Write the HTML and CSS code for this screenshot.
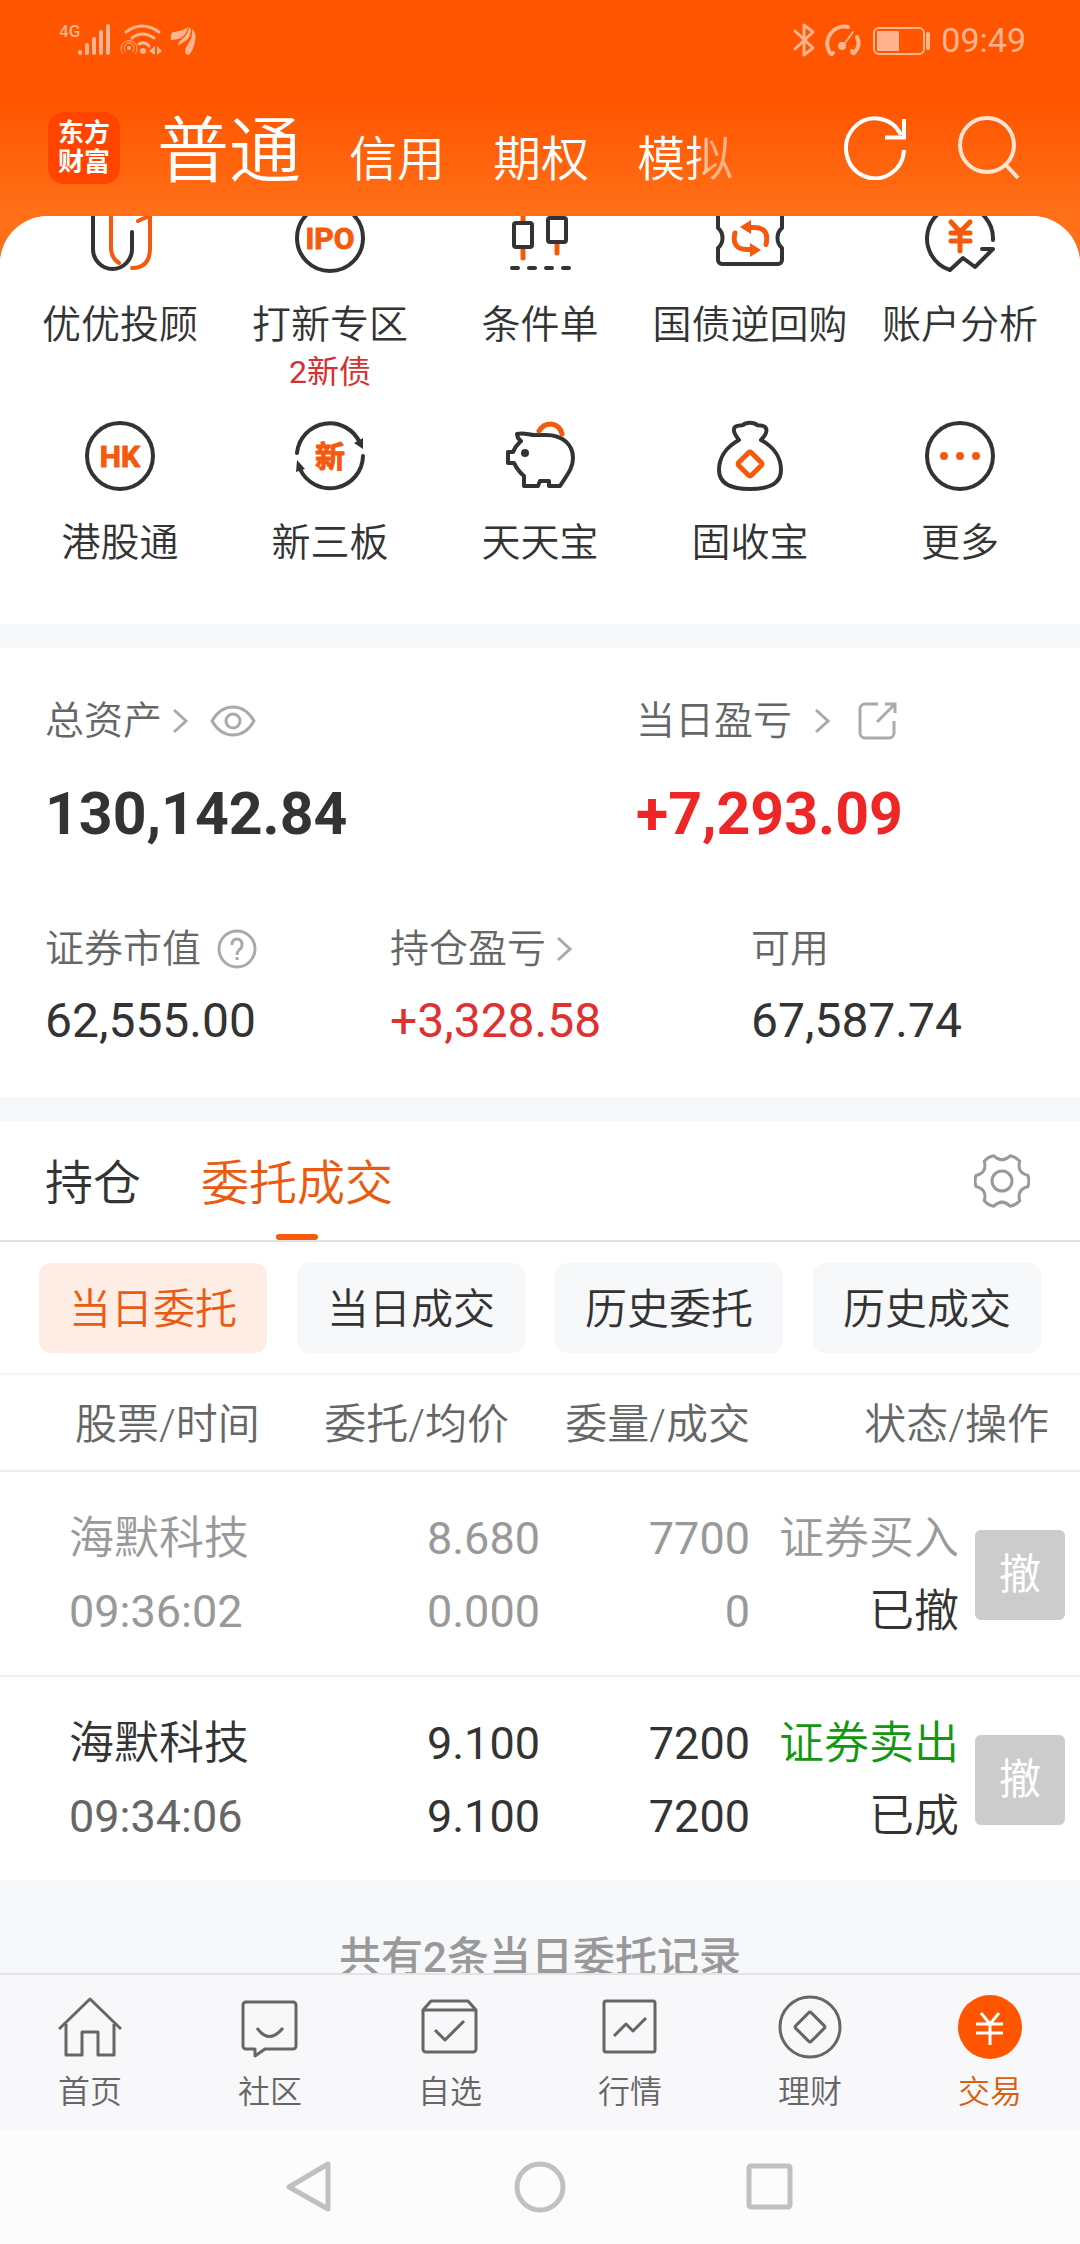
FILE: index.html
```html
<!DOCTYPE html>
<html lang="zh-CN">
<head>
<meta charset="utf-8">
<meta name="viewport" content="width=device-width, initial-scale=1">
<title>交易</title>
<link rel="stylesheet" href="styles.css">
</head>
<body>
<div class="app">
  <header class="top">
    <div class="status">
      <div class="status-side">
        <span class="status-net">4G</span>
        <svg width="34" height="34" viewBox="0 0 34 34" aria-hidden="true">
          <path d="M2 29v1M9 22v8M16 16v14M23 9v21M30 3v27" stroke="currentColor" stroke-width="4" stroke-linecap="round"/>
        </svg>
        <svg width="42" height="34" viewBox="0 0 42 34" fill="none" stroke="currentColor" aria-hidden="true">
          <path d="M6 9Q22-3 39 9M12 15Q22 7 34 15" stroke-width="3" stroke-linecap="round"/>
          <path d="M19 21q6-3 10 2" stroke-width="3" stroke-linecap="round"/>
          <path d="M3 31a8 8 0 1 1 12 0M6 29a5 5 0 1 1 6 0" stroke-width="1"/>
          <g fill="currentColor" stroke="none"><circle cx="9" cy="25" r="2"/><circle cx="23" cy="28" r="3"/><path d="M35 23v9l-6-4zM37 23v9l5-4z"/></g>
        </svg>
        <svg width="26" height="34" viewBox="0 0 26 34" fill="currentColor" aria-hidden="true">
          <path d="M1 17Q0 9 4 9 13 8 18 4 16 14 8 16 4 17 1 17zM8 23Q8 19 12 16 18 12 19 4q2 1 2 4-1 8-7 11-4 2-6 4zM19 32q-4 0-4-4 0-3 3-7 5-7 4-15 5 4 3 12-1 8-6 14z"/>
        </svg>
      </div>
      <div class="status-side">
        <svg width="22" height="34" viewBox="0 0 22 34" fill="none" stroke="currentColor" stroke-width="3" stroke-linejoin="round" stroke-linecap="round" aria-hidden="true"><path d="M2 8l18 17-9 7V2l9 7L2 26"/></svg>
        <svg width="38" height="34" viewBox="0 0 38 34" fill="none" stroke="currentColor" stroke-width="4" stroke-linecap="round" aria-hidden="true"><path d="M10 30q-2 3-4-2A17 17 0 0 1 25 4M34 14q4 8-2 15-2 3-3-1"/><path d="M19 24L30 9" stroke-width="2"/><circle cx="19" cy="23" r="2" fill="currentColor"/></svg>
        <svg class="status-battery" width="58" height="34" viewBox="0 0 58 34" fill="none" stroke="currentColor" stroke-width="2" aria-hidden="true"><rect x="1" y="5" width="50" height="26" rx="5"/><rect x="4" y="8" width="22" height="20" fill="currentColor" stroke="none"/><path d="M55 11v14" stroke-width="4" stroke-linecap="round"/></svg>
        <span class="status-time">09:49</span>
      </div>
    </div>
    <div class="header">
      <a href="#" class="logo"><span>东方</span><span>财富</span></a>
      <nav class="modes">
        <a href="#" class="mode mode-active">普通</a>
        <a href="#" class="mode">信用</a>
        <a href="#" class="mode">期权</a>
        <a href="#" class="mode mode-fade">模拟</a>
      </nav>
      <button class="icon-btn" aria-label="刷新"><svg width="64" height="64" viewBox="0 0 64 64" fill="none" stroke="currentColor" stroke-width="4" aria-hidden="true"><path d="M60 34A29 30 0 1 1 57 19"/><path d="M60 3V21.500H41"/></svg></button>
      <button class="icon-btn icon-btn-soft" aria-label="搜索"><svg width="64" height="64" viewBox="0 0 64 64" fill="none" stroke="currentColor" stroke-width="4" aria-hidden="true"><circle cx="31" cy="29" r="27"/><path d="M49 48L62 62"/></svg></button>
    </div>
  </header>

  <main class="content">
    <nav class="shortcuts">
      <a href="#" class="shortcut">
        <svg class="ico" viewBox="0 0 72 72" aria-hidden="true"><path d="M9 4V47a19.500 20 0 0 0 39 0V30"/><path class="o" d="M27 4V46q0 10 8 15M54 19q8-4 12-5V46q0 20-18 20"/></svg>
        <span class="shortcut-name">优优投顾</span>
      </a>
      <a href="#" class="shortcut">
        <svg class="ico" viewBox="0 0 72 72" aria-hidden="true"><circle cx="36" cy="36" r="33"/><text x="36" y="47" class="ico-text">IPO</text></svg>
        <span class="shortcut-name">打新专区</span>
        <span class="shortcut-note">2新债</span>
      </a>
      <a href="#" class="shortcut">
        <svg class="ico" viewBox="0 0 72 72" aria-hidden="true"><path class="o o-bold" d="M19 8V20M19 47V56M53 4V14M53 42V51"/><rect x="10" y="21" width="18" height="24" rx="2"/><rect x="44" y="16" width="18" height="24" rx="2"/><path d="M8 66h6M25 66h6M42 66h6M59 66h6"/></svg>
        <span class="shortcut-name">条件单</span>
      </a>
      <a href="#" class="shortcut">
        <svg class="ico" viewBox="0 0 72 72" aria-hidden="true"><path d="M8 10H64a4 4 0 0 1 4 4V26c-6 5-6 15 0 20V58a4 4 0 0 1-4 4H8a4 4 0 0 1-4-4V46c6-5 6-15 0-20V14a4 4 0 0 1 4-4z"/><path class="o o-bold" d="M34 25.500h6q16 0 12 17M21 31q-4 16 12 16.500h6"/><path class="of" d="M26 25l11-7v14zM47 48l-11-7v14z"/></svg>
        <span class="shortcut-name">国债逆回购</span>
      </a>
      <a href="#" class="shortcut">
        <svg class="ico" viewBox="0 0 72 72" aria-hidden="true"><path d="M69 38A33 33 0 1 0 26 68L39 56 51 65 69 47H58"/><path class="o o-bold" d="M27 20l9 10 10-10M36 30V49M27 31H46M27 39H46"/></svg>
        <span class="shortcut-name">账户分析</span>
      </a>
      <a href="#" class="shortcut">
        <svg class="ico" viewBox="0 0 72 72" aria-hidden="true"><circle cx="36" cy="36" r="33"/><text x="36" y="47" class="ico-text">HK</text></svg>
        <span class="shortcut-name">港股通</span>
      </a>
      <a href="#" class="shortcut">
        <svg class="ico" viewBox="0 0 72 72" aria-hidden="true"><path d="M3 33A33 33 0 0 1 66 23M69 36A33 33 0 0 1 6 49"/><path class="kf" d="M60 23l9-5v11zM3 40l8 9-9 3z"/><text x="36" y="47" class="ico-text">新</text></svg>
        <span class="shortcut-name">新三板</span>
      </a>
      <a href="#" class="shortcut">
        <svg class="ico" viewBox="0 0 72 72" aria-hidden="true"><path d="M13 14c7-2 12 1 18 1h11c16 0 27 9 27 23 0 11-7 18-13 28H45V61H36L34 66H20V56C14 51 12 47 10 43H4V32h5c2-6 5-8 8-11q-4-3-4-7z"/><circle class="kf" cx="21" cy="33" r="4"/><path class="o o-bold" d="M35 11q4-7 12-7 9 1 11 10"/></svg>
        <span class="shortcut-name">天天宝</span>
      </a>
      <a href="#" class="shortcut">
        <svg class="ico" viewBox="0 0 72 72" aria-hidden="true"><path d="M25 20C21 15 18 10 21 7c2-2 6-1 8-2 3-3 11-3 14 0 2 1 6 0 8 2 3 3 1 8-4 13 13 7 20 18 20 30 0 14-12 19-31 19S5 64 5 50c0-12 7-23 20-30z"/><rect class="o o-bold" x="27" y="35" width="18" height="18" rx="2" transform="rotate(45 36 44)"/></svg>
        <span class="shortcut-name">固收宝</span>
      </a>
      <a href="#" class="shortcut">
        <svg class="ico" viewBox="0 0 72 72" aria-hidden="true"><circle cx="36" cy="36" r="33"/><g class="of"><circle cx="20" cy="36" r="4"/><circle cx="36" cy="36" r="4"/><circle cx="52" cy="36" r="4"/></g></svg>
        <span class="shortcut-name">更多</span>
      </a>
    </nav>

    <section class="assets">
      <div class="assets-row">
        <div class="stat">
          <div class="stat-label">总资产
            <svg class="chev" width="16" height="28" viewBox="0 0 16 28" aria-hidden="true"><path d="M2 3l12 11L2 25"/></svg>
            <button class="mini eye" aria-label="显示或隐藏金额"><svg width="46" height="40" viewBox="0 0 46 40" aria-hidden="true"><path d="M2 20Q10 6 23 6T44 20Q36 34 23 34T2 20z"/><circle cx="23" cy="20" r="7"/></svg></button>
          </div>
          <div class="stat-big">130,142.84</div>
        </div>
        <div class="stat">
          <div class="stat-label">当日盈亏
            <svg class="chev chev-wide" width="16" height="28" viewBox="0 0 16 28" aria-hidden="true"><path d="M2 3l12 11L2 25"/></svg>
            <button class="mini share" aria-label="分享盈亏"><svg width="40" height="40" viewBox="0 0 40 40" aria-hidden="true"><path d="M20 3H7a5 5 0 0 0-5 5V32a5 5 0 0 0 5 5H31a5 5 0 0 0 5-5V20M27 3H37V12M37 3L19 21"/></svg></button>
          </div>
          <div class="stat-big up-strong">+7,293.09</div>
        </div>
      </div>
      <div class="assets-row assets-row-three">
        <div class="stat">
          <div class="stat-label">证券市值
            <button class="mini help" aria-label="说明"><svg width="40" height="40" viewBox="0 0 40 40" aria-hidden="true"><circle cx="20" cy="20" r="18"/><path d="M15 16q0-6 5-6t5 6q0 3-3 5-2 2-2 5M20 28v3"/></svg></button>
          </div>
          <div class="stat-value">62,555.00</div>
        </div>
        <div class="stat">
          <div class="stat-label">持仓盈亏
            <svg class="chev" width="16" height="28" viewBox="0 0 16 28" aria-hidden="true"><path d="M2 3l12 11L2 25"/></svg>
          </div>
          <div class="stat-value up">+3,328.58</div>
        </div>
        <div class="stat">
          <div class="stat-label">可用</div>
          <div class="stat-value">67,587.74</div>
        </div>
      </div>
    </section>

    <section class="orders">
      <div class="tabs">
        <button class="tab">持仓</button>
        <button class="tab tab-active">委托成交</button>
        <button class="mini gear" aria-label="设置"><svg width="56" height="56" viewBox="0 0 56 56" aria-hidden="true"><path d="M53.900 22.500Q42.700 19.500 45.700 8.300 42 3.800 36.200 2.800 28 11 19.800 2.800 14 3.800 10.300 8.300 13.300 19.500 2.100 22.500 0 28 2.100 33.500 13.300 36.500 10.300 47.700 14 52.200 19.800 53.200 28 45 36.200 53.200 42 52.200 45.700 47.700 42.700 36.500 53.900 33.500 56 28 53.900 22.500z"/><circle cx="28" cy="28" r="10"/></svg></button>
      </div>
      <div class="filters">
        <button class="filter filter-active">当日委托</button>
        <button class="filter">当日成交</button>
        <button class="filter">历史委托</button>
        <button class="filter">历史成交</button>
      </div>
      <table class="table">
        <colgroup><col><col><col class="col-qty"><col class="col-state"><col class="col-act"></colgroup>
        <thead>
          <tr><th scope="col">股票/时间</th><th scope="col">委托/均价</th><th scope="col">委量/成交</th><th scope="col" colspan="2">状态/操作</th></tr>
        </thead>
        <tbody>
          <tr class="dim">
            <td><div class="name">海默科技</div><div class="time">09:36:02</div></td>
            <td><div>8.680</div><div>0.000</div></td>
            <td><div>7700</div><div>0</div></td>
            <td><div class="name">证券买入</div><div class="name state">已撤</div></td>
            <td><button class="cancel" disabled>撤</button></td>
          </tr>
          <tr>
            <td><div class="name">海默科技</div><div class="time">09:34:06</div></td>
            <td><div>9.100</div><div>9.100</div></td>
            <td><div>7200</div><div>7200</div></td>
            <td><div class="name sell">证券卖出</div><div class="name state">已成</div></td>
            <td><button class="cancel" disabled>撤</button></td>
          </tr>
        </tbody>
      </table>
    </section>
    <p class="summary">共有2条当日委托记录</p>
  </main>

  <nav class="tabbar">
    <a href="#" class="tabbar-item"><svg class="tico" viewBox="0 0 64 64" aria-hidden="true"><path d="M1 34L32 4 63 34M8 29V60H24V37H40V60H56V29"/></svg>首页</a>
    <a href="#" class="tabbar-item"><svg class="tico" viewBox="0 0 64 64" aria-hidden="true"><path d="M8 7H55a3 3 0 0 1 3 3V51a3 3 0 0 1-3 3H27L17 61V54H8a3 3 0 0 1-3-3V10a3 3 0 0 1 3-3zM19 33q12 17 26 0"/></svg>社区</a>
    <a href="#" class="tabbar-item"><svg class="tico" viewBox="0 0 64 64" aria-hidden="true"><path d="M5 15L13 6H50L58 15V54a3 3 0 0 1-3 3H8a3 3 0 0 1-3-3zH58M17 35L27 45 46 26"/></svg>自选</a>
    <a href="#" class="tabbar-item"><svg class="tico" viewBox="0 0 64 64" aria-hidden="true"><rect x="6" y="6" width="51" height="51" rx="2"/><path d="M16 41L28 29 35 36 48 23"/></svg>行情</a>
    <a href="#" class="tabbar-item"><svg class="tico" viewBox="0 0 64 64" aria-hidden="true"><circle cx="32" cy="32" r="30"/><rect x="21" y="21" width="22" height="22" rx="2" transform="rotate(45 32 32)"/></svg>理财</a>
    <a href="#" class="tabbar-item tabbar-active" aria-current="page"><svg class="tico" viewBox="0 0 64 64" aria-hidden="true"><circle class="tico-disc" cx="32" cy="32" r="32"/><path class="tico-yuan" d="M23 18L32 29 41 18M32 29V50M18 29H45M18 38H45"/></svg>交易</a>
  </nav>

  <nav class="sysbar">
    <button class="sys" aria-label="返回"><svg width="54" height="54" viewBox="0 0 54 54" aria-hidden="true"><path d="M45 4V49L6 27z"/></svg></button>
    <button class="sys" aria-label="主屏幕"><svg width="54" height="54" viewBox="0 0 54 54" aria-hidden="true"><circle cx="27" cy="27" r="23"/></svg></button>
    <button class="sys" aria-label="最近任务"><svg width="54" height="54" viewBox="0 0 54 54" aria-hidden="true"><rect x="6" y="6" width="41" height="41" rx="2"/></svg></button>
  </nav>
</div>
</body>
</html>
```
FILE: styles.css
```css
* { box-sizing: border-box; }

body {
  margin: 0;
  font-family: Roboto, "Noto Sans CJK SC", sans-serif;
  color: #333;
  background: #fcfcfc;
}

a { color: inherit; text-decoration: none; }

button {
  margin: 0;
  padding: 0;
  border: 0;
  background: none;
  color: inherit;
  font: inherit;
}

svg { display: block; flex: none; }

.app {
  display: flex;
  flex-direction: column;
  height: 100vh;
}

/* Header */
.top {
  flex: none;
  background: linear-gradient(#ff5500 38%, #ff7018 82%);
  margin-bottom: -48px;
  padding-bottom: 48px;
}

.status {
  display: flex;
  justify-content: space-between;
  align-items: center;
  height: 80px;
  padding: 0 54px 0 59px;
  color: #ffb48f;
}

.status-side { display: flex; align-items: center; gap: 8px; }
.status-net { align-self: flex-start; margin-right: -10px; font-size: 17px; line-height: 16px; font-weight: 500; }
.status-battery { margin-left: 4px; }
.status-time { margin-left: 2px; font-size: 34px; line-height: 40px; }

.header {
  display: flex;
  align-items: center;
  height: 136px;
  padding: 0 60px 0 48px;
  color: #fff;
}

.logo {
  display: flex;
  flex-direction: column;
  align-items: center;
  justify-content: center;
  width: 72px;
  height: 72px;
  border-radius: 16px;
  background: #ff4400;
  font-size: 26px;
  line-height: 29px;
  font-weight: 700;
}

.modes {
  display: flex;
  flex: 1;
  align-items: baseline;
  gap: 48px;
  margin-left: 37px;
  padding-top: 16px;
}

.mode { font-size: 48px; line-height: 72px; font-weight: 350; }
.mode-active { font-size: 72px; }
.mode-fade { -webkit-mask-image: linear-gradient(90deg, #000 60%, rgba(0, 0, 0, .5) 75%); mask-image: linear-gradient(90deg, #000 60%, rgba(0, 0, 0, .5) 75%); }
.icon-btn { margin-left: 48px; }
.icon-btn-soft { color: #ffe3d1; }

/* Scrolling content */
.content {
  flex: 1;
  min-height: 0;
  overflow: hidden;
  border-radius: 48px 48px 0 0;
  background: #f7f8fa;
}

.shortcuts {
  display: grid;
  grid-template-columns: repeat(5, 1fr);
  grid-auto-rows: 1fr;
  row-gap: 28px;
  margin-top: -14px;
  padding: 0 15px 14px;
  background: #fff;
}

.shortcut {
  display: flex;
  flex-direction: column;
  align-items: center;
  white-space: nowrap;
}

.shortcut-name { margin-top: 24px; font-size: 39px; line-height: 54px; font-weight: 350; }
.shortcut-note { font-size: 32px; line-height: 40px; color: #d63030; }

.ico {
  width: 72px;
  height: 72px;
  fill: none;
  stroke: #333;
  stroke-width: 4;
  stroke-linecap: round;
  stroke-linejoin: round;
}

.ico .o { stroke: #f55a0c; }
.ico .o-bold { stroke-width: 5; }
.ico .of { fill: #f55a0c; stroke: none; }
.ico .kf { fill: #333; stroke: none; }
.ico-text { fill: #f55a0c; stroke: #f55a0c; stroke-width: 1; font-size: 30px; font-weight: 700; text-anchor: middle; }

/* Asset figures */
.assets {
  margin-top: 24px;
  padding: 45px 45px 48px;
  background: #fff;
}

.assets-row { display: grid; grid-template-columns: 591fr 399fr; }
.assets-row-three { grid-template-columns: 345fr 361fr 284fr; margin-top: 72px; }
.stat-label { display: flex; align-items: center; font-size: 39px; line-height: 56px; font-weight: 350; color: #666; }
.stat-big { margin-top: 30px; font-size: 59px; line-height: 70px; font-weight: 700; }
.stat-value { margin-top: 16px; font-size: 48px; line-height: 56px; }
.up { color: #e03131; }
.up-strong { color: #ee2626; }
.chev { margin-left: 10px; fill: none; stroke: #aaa; stroke-width: 3; }
.chev-wide { margin-left: 22px; }
.mini svg { fill: none; stroke: #aaa; stroke-width: 3; }
.eye { margin-left: 22px; }
.share { margin-left: 28px; }
.help { margin-left: 16px; }

/* Orders */
.orders { margin-top: 24px; background: #fff; }

.tabs {
  display: flex;
  align-items: stretch;
  gap: 60px;
  height: 121px;
  padding: 0 50px 0 45px;
  border-bottom: 2px solid #e0e0e0;
}

.tab { position: relative; padding-top: 6px; font-size: 48px; line-height: 72px; font-weight: 350; }
.tab-active { color: #ea5a10; }
.tab-active::after {
  content: "";
  position: absolute;
  left: 50%;
  bottom: 0;
  width: 42px;
  height: 6px;
  margin-left: -21px;
  border-radius: 3px;
  background: #f55a0c;
}
.gear { margin-left: auto; }
.gear svg { stroke: #999; }

.filters {
  display: grid;
  grid-template-columns: repeat(4, 1fr);
  gap: 30px;
  padding: 21px 39px 20px;
  border-bottom: 2px solid #f5f5f5;
}

.filter {
  height: 90px;
  padding-top: 4px;
  border-radius: 12px;
  background: #f7f8fa;
  font-size: 42px;
  line-height: 60px;
  font-weight: 350;
}
.filter-active { background: #feede5; color: #ea5a10; }

.table { width: 100%; border-collapse: collapse; table-layout: fixed; }
.col-qty { width: 210px; }
.col-state { width: 209px; }
.col-act { width: 121px; }

th {
  padding: 21px 31px 16px 0;
  border-bottom: 2px solid #eee;
  font-size: 42px;
  line-height: 58px;
  font-weight: 350;
  color: #666;
  text-align: right;
  white-space: nowrap;
}
th:first-child { padding-left: 75px; padding-right: 0; text-align: left; }
th:nth-child(3) { padding-right: 0; }

td {
  padding: 30px 0 27px;
  font-size: 45px;
  line-height: 73px;
  text-align: right;
  white-space: nowrap;
}
td:first-child { padding-left: 69px; text-align: left; }
td:last-child { padding-right: 15px; }
tbody tr + tr td { border-top: 2px solid #eee; }
.name { font-weight: 350; }
.time { color: #666; }
.dim, .dim .time { color: #999; }
.name.state { color: #333; }
.sell { color: #12980f; }

.cancel {
  width: 90px;
  height: 90px;
  border-radius: 6px;
  background: #ccc;
  color: #fff;
  font-size: 42px;
  line-height: 60px;
  vertical-align: middle;
}

.summary {
  margin: 48px 0 0;
  font-size: 42px;
  line-height: 60px;
  font-weight: 500;
  color: #999;
  text-align: center;
}

/* Bottom bars */
.tabbar {
  display: grid;
  grid-template-columns: repeat(6, 1fr);
  flex: none;
  padding: 20px 0 16px;
  border-top: 2px solid #e3e3e6;
  background: #f8f8fb;
}

.tabbar-item {
  display: flex;
  flex-direction: column;
  align-items: center;
  gap: 11px;
  font-size: 32px;
  line-height: 44px;
  font-weight: 350;
  color: #666;
}
.tabbar-active { color: #d9600f; }

.tico { width: 64px; height: 64px; fill: none; stroke: #666; stroke-width: 3; stroke-linejoin: round; }
.tico .tico-disc { fill: #ff5500; stroke: none; }
.tico .tico-yuan { stroke: #fff; }

.sysbar {
  display: flex;
  flex: none;
  justify-content: center;
  gap: 176px;
  padding: 30px 0;
  background: #fcfcfc;
}
.sys svg { fill: none; stroke: #c0c0c0; stroke-width: 5; stroke-linejoin: round; }
```
